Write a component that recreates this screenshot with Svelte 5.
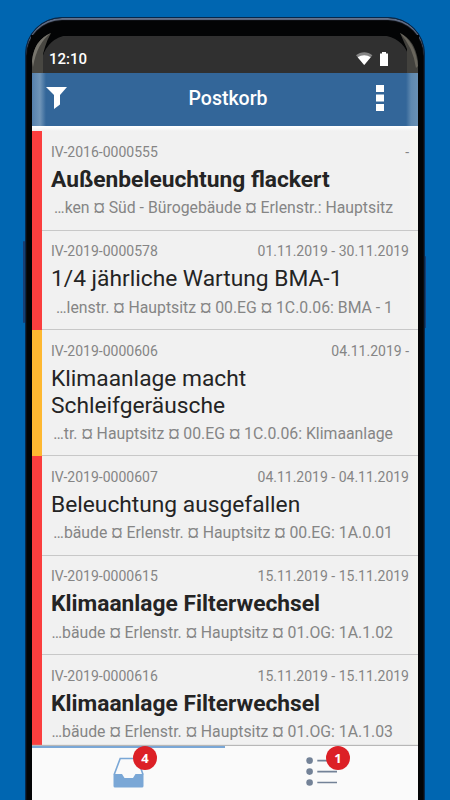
<script lang="ts">
  interface Order {
    id: string;
    dates: string;
    title: string[];
    place: string;
    height: number;
    unread?: boolean;
    warning?: boolean;
  }

  const orders: Order[] = [
    { id: 'IV-2016-0000555', dates: '-', title: ['Außenbeleuchtung flackert'], place: '…ken ¤ Süd - Bürogebäude ¤ Erlenstr.: Hauptsitz', height: 99.5, unread: true },
    { id: 'IV-2019-0000578', dates: '01.11.2019 - 30.11.2019', title: ['1/4 jährliche Wartung BMA-1'], place: '…lenstr. ¤ Hauptsitz ¤ 00.EG ¤ 1C.0.06: BMA - 1', height: 99.5 },
    { id: 'IV-2019-0000606', dates: '04.11.2019 -', title: ['Klimaanlage macht', 'Schleifgeräusche'], place: '…tr. ¤ Hauptsitz ¤ 00.EG ¤ 1C.0.06: Klimaanlage', height: 126, warning: true },
    { id: 'IV-2019-0000607', dates: '04.11.2019 - 04.11.2019', title: ['Beleuchtung ausgefallen'], place: '…bäude ¤ Erlenstr. ¤ Hauptsitz ¤ 00.EG: 1A.0.01', height: 99.5 },
    { id: 'IV-2019-0000615', dates: '15.11.2019 - 15.11.2019', title: ['Klimaanlage Filterwechsel'], place: '…bäude ¤ Erlenstr. ¤ Hauptsitz ¤ 01.OG: 1A.1.02', height: 99.5, unread: true },
    { id: 'IV-2019-0000616', dates: '15.11.2019 - 15.11.2019', title: ['Klimaanlage Filterwechsel'], place: '…bäude ¤ Erlenstr. ¤ Hauptsitz ¤ 01.OG: 1A.1.03', height: 99.5, unread: true },
  ];
</script>

<div class="stage">
  <div class="side-button power"></div>
  <div class="side-button volume"></div>
  <div class="phone">
    <div class="screen">
      <div class="status">
        <span>12:10</span>
        <svg width="34" height="16" viewBox="0 0 34 16">
          <path d="M0 4.2C4.8.3 11.6.3 16.4 4.2L8.2 14Z" fill="#858585" />
          <path d="M1.7 6.2C5.5 3.5 10.9 3.5 14.7 6.2L8.2 14Z" fill="#fff" />
          <path d="M24 2.4h2V1h4v1.4h2V15h-8Z" fill="#fff" />
        </svg>
      </div>
      <header class="toolbar">
        <svg class="filter" width="21" height="23" viewBox="0 0 21 23">
          <path d="M0 0H21L14 8V17.500L8 22V8Z" fill="#fff" />
        </svg>
        <h1>Postkorb</h1>
        <svg class="more" width="8" height="27" viewBox="0 0 8 27">
          <path d="M0 0h8v7H0ZM0 9.500h8v7H0ZM0 19h8v7H0Z" fill="#fff" />
        </svg>
      </header>
      <main>
        {#each orders as order}
          <article class:warning={order.warning} class:unread={order.unread} style="height: {order.height}px">
            <div class="meta">
              <span>{order.id}</span>
              <span>{order.dates}</span>
            </div>
            <h2>
              {#each order.title as line}
                <span>{line}</span>
              {/each}
            </h2>
            <p>{order.place}</p>
          </article>
        {/each}
      </main>
      <nav>
        <div class="tab active">
          <div class="icon">
            <svg width="32" height="32" viewBox="0 0 32 32">
              <path d="M1.200 18.500L7.200 2.500H24.500L30 18.500" fill="none" stroke="#7aa7d6" stroke-width="1.600" />
              <path d="M.5 18H9l2.500 4h8.500l2.500-4h8v12q0 1.500-1.500 1.500H2Q.5 31.500.5 30Z" fill="#7aa7d6" />
            </svg>
            <b class="badge">4</b>
          </div>
        </div>
        <div class="tab">
          <div class="icon">
            <svg width="32" height="32" viewBox="0 0 32 32">
              <g fill="#738297">
                <circle cx="3.600" cy="4.600" r="3.300" />
                <circle cx="3.600" cy="15.600" r="3.300" />
                <circle cx="3.600" cy="26.500" r="3.300" />
                <path d="M11.300 3.800h19.700v1.600H11.300ZM11.300 14.800h19.700v1.600H11.300ZM11.300 25.700h19.700v1.600H11.300Z" />
              </g>
            </svg>
            <b class="badge">1</b>
          </div>
        </div>
      </nav>
    </div>
    <svg class="reflections" width="398" height="80" viewBox="0 0 398 80">
      <path d="M5 17H42Q22 20 16 40L6 55H5Z" fill="#030405" />
      <path d="M393 17H356Q376 20 382 36L392 55H393Z" fill="#030405" />
      <path d="M6 55V43Q8 22 25 15Q21 22 19 29L17 36V55Z" fill="#484742" />
      <path d="M6 43Q8 22 25 15Q11 25 7 49Z" fill="#77756d" />
      <path d="M392 55V43Q389 22 374 15Q378 24 381 31V55Z" fill="#42413d" />
      <path d="M392 48Q389 23 374 15Q387 29 390 50Z" fill="#69665d" />
    </svg>
  </div>
</div>

<style>
  :global(body) {
    margin: 0;
    overflow: hidden;
  }

  .stage {
    position: relative;
    box-sizing: border-box;
    width: 450px;
    height: 800px;
    padding: 17px 25px 0;
    overflow: hidden;
    background: #0066b1;
    font-family: Roboto, sans-serif;
  }

  /* hardware keys at the edges of the case */
  .side-button {
    position: absolute;
    width: 2px;
    border-radius: 1px;
    background: #173e73;
  }

  .power {
    left: 23px;
    top: 241px;
    height: 82px;
  }

  .volume {
    left: 425px;
    top: 256px;
    width: 1px;
    height: 72px;
  }

  .phone {
    position: relative;
    box-sizing: border-box;
    width: 400px;
    height: 840px;
    padding: 18px 6px 0;
    border: 1px solid #07284b;
    border-radius: 37px;
    background: #030405;
    box-shadow: inset 0 2px 1px #65728c;
  }

  .screen {
    display: flex;
    flex-direction: column;
    height: 765px;
    overflow: hidden;
    background: #f1f1f1;
  }

  .reflections {
    position: absolute;
    top: 0;
    left: 0;
    pointer-events: none;
  }

  .status {
    display: flex;
    flex: none;
    justify-content: space-between;
    height: 37px;
    padding: 0 28px 0 17px;
    box-sizing: border-box;
    background: #303030;
    color: #fff;
    font-size: 15px;
    font-weight: 500;
    line-height: 47px;
  }

  .status svg {
    margin-top: 15px;
  }

  .toolbar {
    display: grid;
    grid-template-columns: auto 1fr auto;
    flex: none;
    align-items: start;
    box-sizing: border-box;
    height: 53px;
    padding: 12px 34px 0 14px;
    background: linear-gradient(90deg, #5580ac, #7095b8 8px, #336699 14px, #336699 374px, #5e88af 379px, #6990b4);
    color: #fff;
  }

  .filter {
    margin-top: 2px;
  }

  .toolbar h1 {
    margin: 0;
    padding-left: 13px;
    font-size: 19.5px;
    font-weight: 500;
    line-height: 27px;
    text-align: center;
  }

  main {
    flex: none;
    box-sizing: border-box;
    height: 620px;
    padding-top: 5px;
    overflow: hidden;
    background: linear-gradient(#fff, #f1f1f1 5px);
  }

  article {
    box-sizing: border-box;
    padding: 12.5px 9px 0;
    border-left: 10px solid #fb3e3e;
    box-shadow: inset 0 -1px #c8c8c8;
    background: linear-gradient(90deg, #f1f1f1 366px, #f3f4ee);
  }

  .warning {
    border-left-color: #feb831;
  }

  .meta {
    display: flex;
    justify-content: space-between;
    height: 16px;
    color: #858585;
    font-size: 14px;
    line-height: 16px;
  }

  h2 {
    margin: 6px 0 0;
    color: #242424;
    font-size: 22.75px;
    font-weight: 400;
    line-height: 27px;
  }

  h2 span {
    display: block;
    width: max-content;
  }

  .unread h2 {
    font-weight: 700;
  }

  p {
    margin: 5.5px 16px 0 0;
    color: #858585;
    font-size: 15.8px;
    line-height: 20px;
    text-align: right;
    white-space: nowrap;
  }

  nav {
    position: relative;
    display: flex;
    flex: 1;
    background: #fafafa;
    box-shadow: 0 -1px 1px #b7b7b7;
  }

  .tab {
    box-sizing: border-box;
    width: 50%;
    padding: 8px 0 0 81px;
    border-top: 2px solid transparent;
  }

  .active {
    border-color: #7aa7d6;
  }

  .icon {
    position: relative;
    width: 32px;
    height: 32px;
  }

  .badge {
    position: absolute;
    left: 20px;
    top: -10px;
    width: 24px;
    height: 24px;
    border-radius: 50%;
    background: #dc2026;
    color: #fff;
    font-family: "Open Sans", sans-serif;
    font-size: 13px;
    line-height: 24px;
    text-align: center;
  }
</style>
